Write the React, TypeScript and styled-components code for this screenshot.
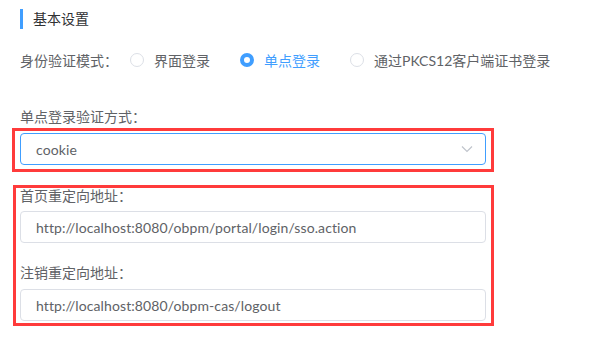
import React from 'react';
import styled, { createGlobalStyle } from 'styled-components';

const GlobalStyle = createGlobalStyle`
  body {
    margin: 0;
    background: #fff;
    font-family: Lato, "Noto Sans CJK SC", sans-serif;
    font-size: 14px;
    color: #606266;
  }
`;

const Page = styled.div`
  padding: 9px 0 0 20px;
  width: 466px;
`;

const SectionTitle = styled.div`
  height: 20px;
  line-height: 20px;
  border-left: 3px solid #409eff;
  padding-left: 10px;
  color: #303133;
  font-size: 14px;
`;

const RadioRow = styled.div`
  display: flex;
  align-items: center;
  width: max-content;
  height: 20px;
  margin-top: 21px;
  white-space: nowrap;
`;

const RowLabel = styled.span`
  flex-shrink: 0;
  width: 110px;
`;

const RadioItem = styled.label<{ $checked?: boolean }>`
  display: flex;
  flex-shrink: 0;
  align-items: center;
  margin-right: 30px;
  color: ${p => (p.$checked ? '#409eff' : '#606266')};
`;

const RadioDot = styled.span<{ $checked?: boolean }>`
  box-sizing: border-box;
  width: 14px;
  height: 14px;
  border-radius: 50%;
  margin-right: 10px;
  border: ${p => (p.$checked ? '4px solid #409eff' : '1px solid #dcdfe6')};
  background: #fff;
`;

const FieldLabel = styled.div<{ $top?: number }>`
  line-height: 20px;
  margin-top: ${p => p.$top ?? 0}px;
`;

const Highlight = styled.div<{ $offset: number; $top: number; $pad: string }>`
  border: 3px solid #ff3b3b;
  margin-left: -${p => p.$offset}px;
  margin-top: ${p => p.$top}px;
  width: 466px;
  padding: ${p => p.$pad};
`;

const BoxLabel = styled.div<{ $top?: number }>`
  line-height: 16px;
  margin-top: ${p => p.$top ?? 0}px;
`;

const Input = styled.div<{ $focus?: boolean; $top?: number }>`
  box-sizing: border-box;
  display: flex;
  align-items: center;
  justify-content: space-between;
  width: 466px;
  height: 32px;
  margin-top: ${p => p.$top ?? 0}px;
  padding: 0 12px 0 15px;
  border: 1px solid ${p => (p.$focus ? '#409eff' : '#dcdfe6')};
  border-radius: 4px;
  color: #606266;
  letter-spacing: 0.1px;
  background: #fff;
`;

const Chevron = () => (
  <svg width="12" height="8" viewBox="0 0 12 8" fill="none">
    <path d="M1 1.5 L6 6.5 L11 1.5" stroke="#c0c4cc" strokeWidth="1.2" />
  </svg>
);

const modes = [
  { label: '界面登录', checked: false },
  { label: '单点登录', checked: true },
  { label: '通过PKCS12客户端证书登录', checked: false },
];

export default function App() {
  return (
    <>
      <GlobalStyle />
      <Page>
        <SectionTitle>基本设置</SectionTitle>
        <RadioRow>
          <RowLabel>身份验证模式：</RowLabel>
          {modes.map(m => (
            <RadioItem key={m.label} $checked={m.checked}>
              <RadioDot $checked={m.checked} />
              {m.label}
            </RadioItem>
          ))}
        </RadioRow>
        <FieldLabel $top={37}>单点登录验证方式：</FieldLabel>
        <Highlight $offset={8} $top={1} $pad="2px 5px 4px 5px">
          <Input $focus>
            <span>cookie</span>
            <Chevron />
          </Input>
        </Highlight>
        <Highlight $offset={7} $top={13} $pad="0 5px 2px 4px">
          <BoxLabel>首页重定向地址：</BoxLabel>
          <Input $top={7}>http://localhost:8080/obpm/portal/login/sso.action</Input>
          <BoxLabel $top={22}>注销重定向地址：</BoxLabel>
          <Input $top={8}>http://localhost:8080/obpm-cas/logout</Input>
        </Highlight>
      </Page>
    </>
  );
}
